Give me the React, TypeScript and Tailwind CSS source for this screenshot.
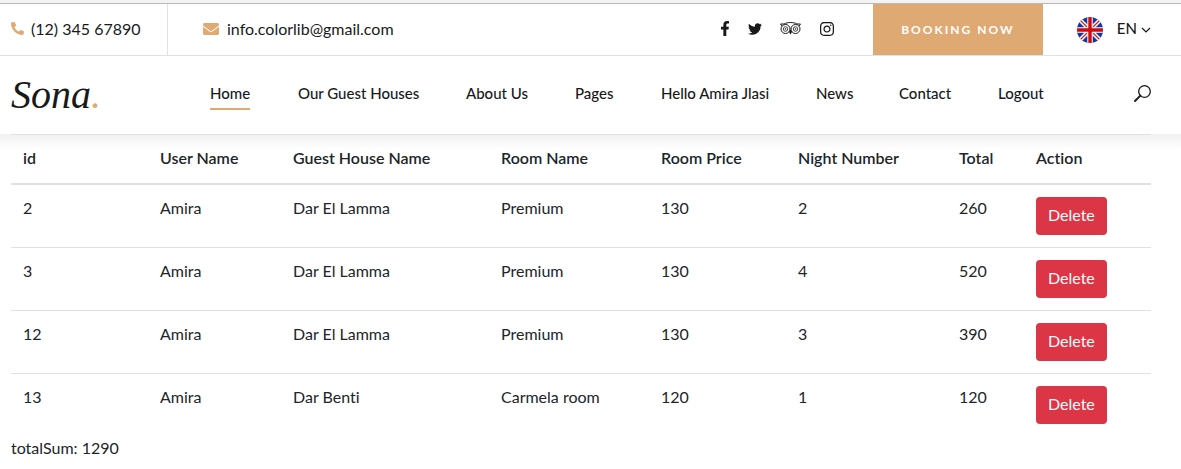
import { FaEnvelope, FaFacebookF, FaInstagram, FaPhoneAlt, FaTwitter } from "react-icons/fa";

type Booking = {
  id: number;
  user: string;
  house: string;
  room: string;
  price: number;
  nights: number;
  total: number;
};

const bookings: Booking[] = [
  { id: 2, user: "Amira", house: "Dar El Lamma", room: "Premium", price: 130, nights: 2, total: 260 },
  { id: 3, user: "Amira", house: "Dar El Lamma", room: "Premium", price: 130, nights: 4, total: 520 },
  { id: 12, user: "Amira", house: "Dar El Lamma", room: "Premium", price: 130, nights: 3, total: 390 },
  { id: 13, user: "Amira", house: "Dar Benti", room: "Carmela room", price: 120, nights: 1, total: 120 },
];

const columns = [
  { label: "id", width: "w-[137px]" },
  { label: "User Name", width: "w-[133px]" },
  { label: "Guest House Name", width: "w-[208px]" },
  { label: "Room Name", width: "w-[160px]" },
  { label: "Room Price", width: "w-[137px]" },
  { label: "Night Number", width: "w-[161px]" },
  { label: "Total", width: "w-[77px]" },
  { label: "Action", width: "w-[127px]" },
];

const navItems = ["Home", "Our Guest Houses", "About Us", "Pages", "Hello Amira Jlasi", "News", "Contact", "Logout"];

function TripadvisorIcon() {
  return (
    <svg viewBox="0 0 42 26" className="h-[13px] w-[21px]" fill="none" stroke="currentColor" aria-hidden="true">
      <path d="M1 4h7C15 0 27 0 34 4h7l-3 4M1 4l3 4" strokeWidth="2" />
      <circle cx="11" cy="14" r="9" strokeWidth="2" />
      <circle cx="31" cy="14" r="9" strokeWidth="2" />
      <circle cx="11" cy="14" r="4.5" strokeWidth="1.6" />
      <circle cx="31" cy="14" r="4.5" strokeWidth="1.6" />
      <circle cx="11" cy="14" r="1.6" fill="currentColor" stroke="none" />
      <circle cx="31" cy="14" r="1.6" fill="currentColor" stroke="none" />
      <path d="M18 20l3 5 3-5-3-5z" fill="currentColor" stroke="none" />
    </svg>
  );
}

function UnionJack() {
  return (
    <svg viewBox="0 0 26 26" className="size-[26px] rounded-full" aria-hidden="true">
      <rect width="26" height="26" fill="#17359b" />
      <path d="M0 0l26 26M26 0L0 26" stroke="#fff" strokeWidth="4.2" />
      <path d="M0 0l26 26M26 0L0 26" stroke="#d3202f" strokeWidth="1.3" />
      <path d="M13 0v26M0 13h26" stroke="#fff" strokeWidth="5.4" />
      <path d="M13 0v26M0 13h26" stroke="#cc0a12" strokeWidth="3.4" />
    </svg>
  );
}

function TopBar() {
  return (
    <div className="border-b border-[#e1e1e1]">
      <div className="flex h-[51px] items-stretch justify-between pr-[30px] pl-[11px]">
        <div className="flex text-base">
          <a href="tel:1234567890" className="flex w-[157px] items-center gap-[7px] border-r border-[#e1e1e1] pb-0.5">
            <FaPhoneAlt className="size-[13px] text-[#dfa974]" aria-hidden="true" />
            (12) 345 67890
          </a>
          <a href="mailto:info.colorlib@gmail.com" className="flex items-center gap-2 pb-0.5 pl-[35px]">
            <FaEnvelope className="size-4 text-[#dfa974]" aria-hidden="true" />
            info.colorlib@gmail.com
          </a>
        </div>
        <div className="flex items-center">
          <div className="mr-[38px] flex items-center gap-[18px] pb-0.5">
            <a href="#facebook" aria-label="Facebook">
              <FaFacebookF className="h-[15px] w-[10px]" />
            </a>
            <a href="#twitter" aria-label="Twitter">
              <FaTwitter className="size-[14px]" />
            </a>
            <a href="#tripadvisor" aria-label="Tripadvisor">
              <TripadvisorIcon />
            </a>
            <a href="#instagram" aria-label="Instagram">
              <FaInstagram className="size-4" />
            </a>
          </div>
          <a
            href="#booking"
            className="flex w-[170px] items-center justify-center self-stretch bg-[#dfa974] text-[12px] font-bold tracking-[2px] text-white"
          >
            BOOKING NOW
          </a>
          <button type="button" className="ml-[34px] flex items-center">
            <UnionJack />
            <span className="ml-[14px] pb-0.5 text-[15px] font-medium">EN</span>
            <svg viewBox="0 0 10 6" className="ml-1 h-[6px] w-[10px]" fill="none" stroke="currentColor" aria-hidden="true">
              <path d="M1 1l4 4 4-4" strokeWidth="1.2" />
            </svg>
          </button>
        </div>
      </div>
    </div>
  );
}

function MainNav() {
  return (
    <div className="flex h-[78px] items-center justify-between pr-[30px] pl-[11px]">
      <a href="#home" className="w-[199px] font-['Liberation_Serif',serif] text-[40px] leading-[44px] italic">
        Sona<span className="text-[#dfa974]">.</span>
      </a>
      <nav className="flex-1">
        <ul className="grid grid-cols-[88fr_168fr_109fr_86fr_155fr_83fr_99fr_48fr] text-[15px] font-medium whitespace-nowrap">
          {navItems.map((item, index) => (
            <li key={item} className="flex">
              <a
                href={`#${item.toLowerCase().replaceAll(" ", "-")}`}
                className={
                  index === 0
                    ? "border-b-2 border-[#dfa974] pb-0.5 leading-[26px]"
                    : "border-b-2 border-transparent pb-0.5 leading-[26px]"
                }
              >
                {item}
              </a>
            </li>
          ))}
        </ul>
      </nav>
      <button type="button" aria-label="Search" className="ml-[88px] pb-1">
        <svg viewBox="0 0 17 17" className="size-[17px]" fill="none" stroke="currentColor" aria-hidden="true">
          <circle cx="10.5" cy="6.5" r="5.8" strokeWidth="1.3" />
          <path d="M6.4 10.6L1 16" strokeWidth="1.9" strokeLinecap="round" />
        </svg>
      </button>
    </div>
  );
}

export default function App() {
  const totalSum = bookings.reduce((sum, booking) => sum + booking.total, 0);
  return (
    <div className="min-h-screen bg-white font-[Lato,sans-serif] text-base text-[#19191a] [font-variant-ligatures:none]">
      <div className="h-1 border-b border-[#b9b9b9] bg-[#f3f3f3]" />
      <header>
        <TopBar />
        <MainNav />
      </header>
      <main className="bg-linear-to-b from-[#f2f0f0] to-white to-[16px] pr-[30px] pl-[11px] text-[#212529]">
        <table className="w-full table-fixed border-collapse text-left">
          <thead>
            <tr className="border-t border-b-2 border-t-[#dee2e6] border-b-[#dee2e6]">
              {columns.map((column) => (
                <th key={column.label} scope="col" className={`${column.width} px-3 pt-[11px] pb-[13px] font-semibold whitespace-nowrap`}>
                  {column.label}
                </th>
              ))}
            </tr>
          </thead>
          <tbody>
            {bookings.map((booking) => (
              <tr key={booking.id} className="border-t border-[#dee2e6] align-top">
                <td className="px-3 pt-[11px]">{booking.id}</td>
                <td className="px-3 pt-[11px]">{booking.user}</td>
                <td className="px-3 pt-[11px]">{booking.house}</td>
                <td className="px-3 pt-[11px]">{booking.room}</td>
                <td className="px-3 pt-[11px]">{booking.price}</td>
                <td className="px-3 pt-[11px]">{booking.nights}</td>
                <td className="px-3 pt-[11px]">{booking.total}</td>
                <td className="p-3">
                  <button type="button" className="block h-[38px] rounded bg-[#dc3545] px-3 pb-0.5 text-white">
                    Delete
                  </button>
                </td>
              </tr>
            ))}
          </tbody>
        </table>
        <p>totalSum: {totalSum}</p>
      </main>
    </div>
  );
}
